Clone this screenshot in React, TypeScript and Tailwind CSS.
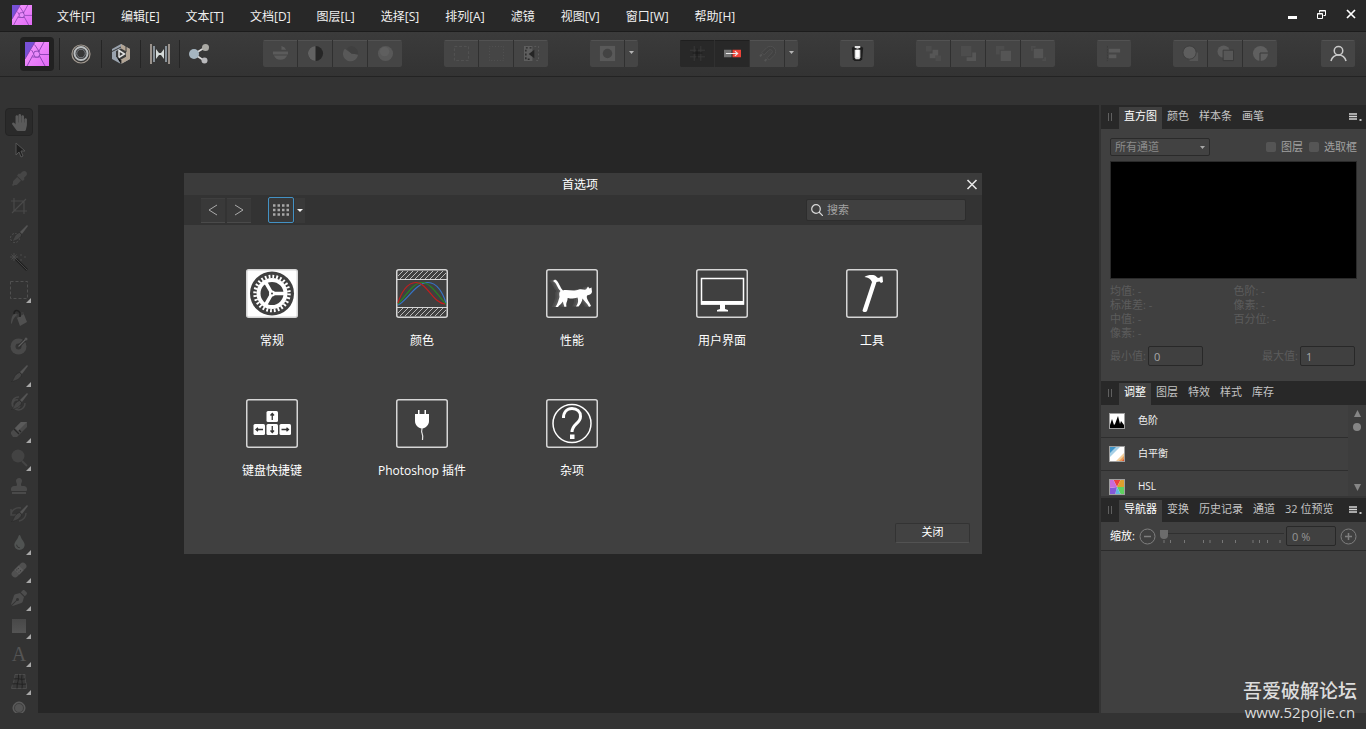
import React from 'react';
import { FaEyeDropper, FaHandPaper, FaPenNib, FaStamp, FaTint } from 'react-icons/fa';

const MENUS = [
  '文件[F]',
  '编辑[E]',
  '文本[T]',
  '文档[D]',
  '图层[L]',
  '选择[S]',
  '排列[A]',
  '滤镜',
  '视图[V]',
  '窗口[W]',
  '帮助[H]',
];

const AppLogo: React.FC<{ className: string }> = ({ className }) => (
  <svg className={className} viewBox="0 0 24 24">
    <defs>
      <linearGradient id="logoPink" x1="0" y1="0" x2="1" y2="1">
        <stop offset="0" stopColor="#f79bff" />
        <stop offset="1" stopColor="#e06af5" />
      </linearGradient>
    </defs>
    <rect width="24" height="24" fill="url(#logoPink)" />
    <path d="M0 0h10L0 17z" fill="#7850d6" />
    <path
      d="M10 0L0 17M9.500 2.500L14.500 10M19 0L13.500 10M15 12.500h9M14 13L20 24M7.500 15h7M8 13L2 24M6.500 8L9 12"
      stroke="#7a3aa8"
      strokeWidth="0.800"
      fill="none"
    />
    <path d="M9.500 9.500l3.500-.500 2 3-1.500 3H10L8.500 12z" fill="#e88bfa" stroke="#7a3aa8" strokeWidth="0.800" />
  </svg>
);

const MenuBar: React.FC = () => (
  <header className="flex h-8 shrink-0 items-center border-b border-[#1c1c1c] bg-[#282828] pl-3">
    <AppLogo className="mb-px size-5" />
    <nav className="ml-3 flex pt-0.5">
      {MENUS.map((menu) => (
        <button key={menu} type="button" className="px-[13px] text-xs whitespace-nowrap text-[#f0f0f0]">
          {menu}
        </button>
      ))}
    </nav>
    <div className="mb-1 ml-auto flex gap-[9px] pr-[5px] text-white">
      <button type="button" aria-label="minimize" className="flex h-5 w-5 items-center justify-center">
        <svg className="size-3" viewBox="0 0 12 12">
          <path d="M1 8h9v3H1z" fill="currentColor" />
        </svg>
      </button>
      <button type="button" aria-label="restore" className="flex h-5 w-5 items-center justify-center">
        <svg className="size-3" viewBox="0 0 12 12" fill="none" stroke="currentColor">
          <path d="M3.500 4.500v-2h6v5h-2M3.500 3h6M1.500 5.500h5v5h-5zM1.500 6h5" />
        </svg>
      </button>
      <button type="button" aria-label="close" className="flex h-5 w-5 items-center justify-center">
        <svg className="size-3" viewBox="0 0 12 12" fill="none" stroke="currentColor" strokeWidth="1.700">
          <path d="M2 2l8 8M10 2l-8 8" />
        </svg>
      </button>
    </div>
  </header>
);

const PERSONAS = [
  {
    name: 'liquify',
    art: (
      <g fill="none">
        <circle cx="10" cy="10" r="9" stroke="#a39a90" strokeWidth="1.200" />
        <circle cx="10" cy="9.500" r="6.500" stroke="#b8bcbe" strokeWidth="2" />
        <circle cx="10" cy="9.500" r="4.300" stroke="#7d8289" strokeWidth="1" />
      </g>
    ),
  },
  {
    name: 'develop',
    art: (
      <g>
        <path d="M10 0l9 5v10l-9 5-9-5V5z" fill="#9aa3ae" />
        <path d="M10 0l9 5v10l-9 5z" fill="#b3a595" />
        <path d="M10 4.500l5 2.800v5.400l-5 2.800-5-2.800V7.300z" fill="#3b3b3b" />
        <path d="M8 6.500l5.500 3.500-5.500 3.500z" fill="none" stroke="#e2e2e2" strokeWidth="1.500" />
        <path d="M1 7.500L10 3M15 8V2M5 12l5 4v4" stroke="#3b3b3b" strokeWidth="1" />
      </g>
    ),
  },
  {
    name: 'tone mapping',
    art: (
      <g>
        <path d="M1 0v20M19 0v20" stroke="#b3a9a0" strokeWidth="1.600" />
        <path d="M4 2v16M16 2v16" stroke="#9da8b2" strokeWidth="1.600" />
        <path d="M6 5l3 4h2l3-4v10l-3-4H9l-3 4z" fill="#d5dad8" />
      </g>
    ),
  },
  {
    name: 'export',
    art: (
      <g>
        <path d="M5 10l11-6.500M5 10l10 6.500" stroke="#d8d8d8" strokeWidth="1.600" />
        <circle cx="5" cy="10" r="5" fill="#a5b5c0" />
        <circle cx="16.500" cy="3.500" r="3.500" fill="#aaa9a4" />
        <circle cx="15.500" cy="16.500" r="3" fill="#b9b9bc" />
      </g>
    ),
  },
];

interface BarButtonProps {
  label: string;
  children?: React.ReactNode;
  narrow?: boolean;
  pressed?: boolean;
}

const BarButton: React.FC<BarButtonProps> = ({ label, children, narrow, pressed }) => (
  <button
    type="button"
    aria-label={label}
    className={`flex h-[27px] items-center justify-center border-t ${narrow ? 'w-[13px]' : 'w-[34px]'} ${
      pressed ? 'border-[#1f1f1f] bg-[#282828]' : 'border-[#525252] bg-[#454545]'
    }`}
  >
    {narrow ? (
      <svg className="mb-1 h-[3px] w-[5px]" viewBox="0 0 5 3">
        <path d="M0 0h5L2.500 3z" fill="#b4b4b4" />
      </svg>
    ) : (
      <svg className="mb-px size-[17px]" viewBox="0 0 18 18">
        {children}
      </svg>
    )}
  </button>
);

const BarGroup: React.FC<{ children: React.ReactNode }> = ({ children }) => (
  <div className="flex gap-px overflow-hidden rounded-xs bg-[#303030]">{children}</div>
);

const Toolbar: React.FC = () => (
  <div className="flex h-[45px] shrink-0 items-center border-b border-[#232323] bg-linear-to-b from-[#3b3b3b] to-[#333333] pr-[11px] pb-px pl-5">
    <button
      type="button"
      aria-label="photo"
      className="flex size-[34px] items-center justify-center rounded-sm bg-[#212121]"
    >
      <AppLogo className="size-6" />
    </button>
    <div className="ml-[5px] h-8 w-px bg-[#222222]" />
    <div className="flex items-center divide-x divide-[#252525]">
      {PERSONAS.map((persona) => (
        <button
          key={persona.name}
          type="button"
          aria-label={persona.name}
          className="flex h-7 w-[39px] items-center justify-center first:w-[42px] last:w-[37px]"
        >
          <svg className="size-5" viewBox="0 0 20 20">
            {persona.art}
          </svg>
        </button>
      ))}
    </div>
    <div className="ml-[46px] flex gap-[42px]">
      <BarGroup>
        <BarButton label="auto levels">
          <path d="M2 11a7.500 7 0 0 0 14 0zM10 1a7 7 0 0 1 5 4h-5zM1 7h16v3H1z" fill="#5b5b5b" />
        </BarButton>
        <BarButton label="auto contrast">
          <circle cx="9" cy="9" r="8" fill="#262626" />
          <path d="M9 1a8 8 0 0 0 0 16z" fill="#626262" />
        </BarButton>
        <BarButton label="auto colours">
          <path d="M3 4a8 8 0 1 0 14 6L10 9z" fill="#585858" />
          <path d="M10 1a8 8 0 0 1 7 9l-7-1-5-5a8 8 0 0 1 5-3z" fill="#404040" />
        </BarButton>
        <BarButton label="auto white balance">
          <circle cx="9" cy="9" r="8" fill="#585858" />
          <circle cx="8" cy="7" r="5" fill="#5f5f5f" />
        </BarButton>
      </BarGroup>
      <BarGroup>
        <BarButton label="select all">
          <rect x="1.500" y="1.500" width="15" height="15" fill="none" stroke="#545454" strokeDasharray="3 2" />
        </BarButton>
        <BarButton label="deselect">
          <rect x="1.500" y="1.500" width="15" height="15" fill="none" stroke="#545454" strokeDasharray="1 2" />
        </BarButton>
        <BarButton label="invert selection">
          <path d="M1 1h9v16H1z" fill="#5e5e5e" />
          <path d="M9 3H3v12h6" stroke="#282828" strokeWidth="1.500" strokeDasharray="2 2" fill="none" />
          <path d="M12 5v9L6 9.500z" fill="#252525" />
          <path d="M12 1.500h4.500v15H12" fill="none" stroke="#5c5c5c" strokeDasharray="2 2" />
        </BarButton>
      </BarGroup>
      <BarGroup>
        <BarButton label="quick mask">
          <rect x="1" y="1" width="16" height="16" fill="#595959" />
          <circle cx="9" cy="9" r="5" fill="#434343" />
        </BarButton>
        <BarButton label="quick mask options" narrow />
      </BarGroup>
      <BarGroup>
        <BarButton label="force pixel alignment" pressed>
          <path d="M1 5.500h16M1 12.500h16M5.500 1v16M12.500 1v16" stroke="#393939" />
          <path d="M4 8.500h10M8.500 4v10" stroke="#191919" />
        </BarButton>
        <BarButton label="move by whole pixels" pressed>
          <path d="M0 5h8v8H0z" fill="#747474" />
          <path d="M9 5h9v8H9z" fill="#ee4338" />
          <path d="M2 9h12M11.500 6.500L14.500 9l-3 2.500" stroke="#ececec" strokeWidth="1.200" fill="none" />
        </BarButton>
        <BarButton label="snapping">
          <path
            d="M3 8l5-5a5.500 5.500 0 0 1 8 8l-5 5-2.500-2.500 5-5a2 2 0 0 0-3-3l-5 5z"
            fill="#424242"
            stroke="#515151"
          />
          <path d="M1 12l2-2M6 17l2-2" stroke="#555555" strokeWidth="2" />
        </BarButton>
        <BarButton label="snapping options" narrow />
      </BarGroup>
      <BarGroup>
        <BarButton label="assistant">
          <path d="M3 3l3-2h6l3 2-1 12-2 2H6l-2-2z" fill="#1d1d1d" />
          <path d="M6 5h6v8l-1 2H7l-1-2z" fill="#dddddd" />
          <path d="M7.500 5h3v8h-3z" fill="#ffffff" />
          <path d="M6 1h6v2l-3 1-3-1z" fill="#e4e4e4" />
        </BarButton>
      </BarGroup>
      <BarGroup>
        <BarButton label="move to back">
          <path d="M1 1h6v6H1zM11 11h6v6h-6z" fill="#4c4c4c" />
          <path d="M8 5h6v6h-3v3H5V9h3z" fill="#565656" />
        </BarButton>
        <BarButton label="move backward">
          <path d="M1 1h11v11H1z" fill="#4d4d4d" />
          <path d="M13 8h4v9H7v-4h6z" fill="#565656" />
        </BarButton>
        <BarButton label="move forward">
          <path d="M1 1h9v4H5v5H1z" fill="#4d4d4d" />
          <path d="M6 6h11v11H6z" fill="#555555" />
        </BarButton>
        <BarButton label="move to front">
          <path d="M1 1h5v2H3v3H1zM17 17h-4v-2h2v-2h2z" fill="#4d4d4d" />
          <path d="M4 4h10v10H4z" fill="#555555" />
        </BarButton>
      </BarGroup>
      <BarGroup>
        <BarButton label="align">
          <path d="M1.500 1v16" stroke="#3c3c3c" strokeDasharray="2 1" />
          <path d="M3 4h12v4H3zM3 10h8v4H3z" fill="#5a5a5a" />
        </BarButton>
      </BarGroup>
      <BarGroup>
        <BarButton label="add">
          <path d="M8 8h9v9H8z" fill="#565656" />
          <circle cx="8" cy="8" r="7" fill="#5e5e5e" stroke="#404040" />
        </BarButton>
        <BarButton label="subtract">
          <circle cx="7" cy="7" r="6.500" fill="#5c5c5c" />
          <path d="M6.500 5.500h11v11h-11z" fill="#575757" stroke="#393939" />
        </BarButton>
        <BarButton label="intersect">
          <circle cx="9" cy="9" r="8" fill="#5f5f5f" />
          <path d="M8.500 17V8.500H17" fill="none" stroke="#383838" />
        </BarButton>
      </BarGroup>
    </div>
    <div className="ml-auto">
      <BarGroup>
        <BarButton label="account">
          <g fill="none" stroke="#c9c9c9" strokeWidth="1.600">
            <circle cx="9" cy="6" r="4.500" />
            <path d="M1 17c1-4 4-6.500 8-6.500s7 2.500 8 6.500" />
          </g>
        </BarButton>
      </BarGroup>
    </div>
  </div>
);

interface Tool {
  name: string;
  icon: React.ReactNode;
  menu?: boolean;
}

const Brush: React.FC<{ children?: React.ReactNode }> = ({ children }) => (
  <svg className="size-[18px]" viewBox="0 0 18 18">
    {children}
    <path d="M17 0l1 1-6 8-2-2z" fill="#545454" />
    <path d="M9.500 7.500l2 2c0 3-4 6-10 7 3-2 2-7 8-9z" fill="#464646" stroke="#272727" strokeWidth="0.500" />
  </svg>
);

const TOOLS: Tool[] = [
  { name: 'view', icon: <FaHandPaper className="size-[17px] text-[#5a5a5a]" /> },
  {
    name: 'move',
    icon: (
      <svg className="size-[18px]" viewBox="0 0 18 18">
        <path d="M6 2v12l3-3 2 5 2-1-2-5h4z" fill="#1f1f1f" stroke="#555555" />
      </svg>
    ),
  },
  { name: 'colour picker', icon: <FaEyeDropper className="size-[15px] text-[#464646]" /> },
  {
    name: 'crop',
    icon: (
      <svg className="size-[18px]" viewBox="0 0 18 18" fill="none" stroke="#494949" strokeWidth="1.200">
        <path d="M4 1v13h13M1 4h13v13M2 16L16 2" />
      </svg>
    ),
  },
  {
    name: 'selection brush',
    icon: (
      <Brush>
        <circle cx="5" cy="13" r="4.500" fill="none" stroke="#505050" strokeDasharray="2 1.500" />
      </Brush>
    ),
  },
  {
    name: 'flood select',
    icon: (
      <svg className="size-[18px]" viewBox="0 0 18 18">
        <path d="M6 6l11 11" stroke="#1f1f1f" strokeWidth="2.500" />
        <path d="M6 6l11 11" stroke="#555555" strokeWidth="0.700" />
        <path d="M4 0v8M0 4h8M1.500 1.500l5 5M6.500 1.500l-5 5M11 1v2M10 7h2M14 4h2" stroke="#4a4a4a" />
      </svg>
    ),
  },
  {
    name: 'marquee',
    menu: true,
    icon: (
      <svg className="size-[18px]" viewBox="0 0 18 18">
        <rect x="0.500" y="0.500" width="17" height="17" fill="none" stroke="#505050" strokeDasharray="3 2" />
      </svg>
    ),
  },
  {
    name: 'flood fill',
    icon: (
      <svg className="size-[18px]" viewBox="0 0 18 18">
        <path d="M6 6l7-3 4 10-7 4z" fill="#505050" />
        <path d="M6 6l7-3 1 2-7 4z" fill="#3a3a3a" />
        <path d="M7 5c-4-1-6 3-6 10 2-1 1-5 5-8z" fill="#4b4b4b" />
        <path d="M4 5c0-4 4-5 6-1v4" fill="none" stroke="#202020" strokeWidth="1.500" />
      </svg>
    ),
  },
  {
    name: 'gradient',
    icon: (
      <svg className="size-[18px]" viewBox="0 0 18 18">
        <circle cx="8.500" cy="9.500" r="8" fill="#494949" />
        <circle cx="8.500" cy="9.500" r="3" fill="#333333" />
        <path d="M8.500 9.500L16 2" stroke="#2a2a2a" strokeWidth="3" />
        <path d="M8.500 9.500L16 2" stroke="#606060" strokeWidth="1.200" />
        <circle cx="16" cy="2" r="1.500" fill="#555555" />
      </svg>
    ),
  },
  { name: 'paint brush', menu: true, icon: <Brush /> },
  {
    name: 'paint mixer',
    icon: (
      <Brush>
        <path d="M9 4a6.500 6.500 0 1 0 6 6M10 13a4 4 0 1 1-2-6" fill="none" stroke="#484848" strokeWidth="1.500" />
      </Brush>
    ),
  },
  {
    name: 'erase',
    menu: true,
    icon: (
      <svg className="size-[18px]" viewBox="0 0 18 18">
        <path d="M11 1h6v5L7 16H3l-2-3v-2z" fill="#4a4a4a" />
        <path d="M4 8l5 5M6 6l5 5" stroke="#272727" strokeWidth="1.300" />
        <path d="M11 1h6l-9 9-3-3z" fill="#5a5a5a" />
      </svg>
    ),
  },
  {
    name: 'dodge',
    menu: true,
    icon: (
      <svg className="size-[18px]" viewBox="0 0 18 18">
        <circle cx="8" cy="7" r="6.500" fill="#434343" />
        <path d="M12 12l5 5" stroke="#454545" strokeWidth="2" />
      </svg>
    ),
  },
  { name: 'clone', icon: <FaStamp className="size-4 text-[#4a4a4a]" /> },
  {
    name: 'undo brush',
    icon: (
      <Brush>
        <path d="M1 10a8 7 0 0 1 10-7M1 4v6h5M16 8a8 8 0 0 1-7 8" fill="none" stroke="#464646" strokeWidth="1.500" />
      </Brush>
    ),
  },
  { name: 'blur', menu: true, icon: <FaTint className="size-[15px] text-[#505352]" /> },
  {
    name: 'healing',
    menu: true,
    icon: (
      <svg className="size-[18px]" viewBox="0 0 18 18">
        <g transform="rotate(-45 9 9)">
          <rect x="0" y="5.500" width="18" height="7" rx="3.500" fill="#505050" />
          <rect x="6" y="5.500" width="6" height="7" fill="#5b5b5b" />
          <path d="M7 7.500h4M7 10.500h4" stroke="#333333" strokeDasharray="1 1" />
        </g>
      </svg>
    ),
  },
  { name: 'pen', menu: true, icon: <FaPenNib className="size-4 text-[#4d4d4d]" /> },
  {
    name: 'rectangle',
    menu: true,
    icon: <span className="h-3.5 w-3.5 bg-linear-to-b from-[#484848] to-[#545454]" />,
  },
  {
    name: 'text',
    menu: true,
    icon: <span className="font-['Liberation_Serif',serif] text-xl leading-5 text-[#555555]">A</span>,
  },
  {
    name: 'mesh warp',
    menu: true,
    icon: (
      <svg className="size-[18px]" viewBox="0 0 18 18" fill="none">
        <path d="M5 1.500h10c-1 5 2 9 1.500 14h-15C2 11 5 8 5 1.500z" fill="#3a3a3a" stroke="#4c4c4c" />
        <path d="M4 6c4-1 7 1 11 0M2 11c5-1 9 1 14 0M8.500 1.500c1 5-2 9-1.500 14M12 1.500c-1 5 1 9 0 14" stroke="#222222" />
      </svg>
    ),
  },
  {
    name: 'zoom',
    icon: (
      <svg className="mb-1 size-[14px]" viewBox="0 0 14 14">
        <circle cx="7" cy="7" r="6" fill="#545454" stroke="#606060" />
        <circle cx="7" cy="7" r="4.500" fill="none" stroke="#404040" />
      </svg>
    ),
  },
];

const ToolColumn: React.FC = () => (
  <aside className="w-[38px] shrink-0 overflow-hidden pt-[3px]">
    {TOOLS.map((tool, index) => (
      <button
        key={tool.name}
        type="button"
        aria-label={tool.name}
        className={`relative ml-[5px] flex size-7 items-center justify-center rounded-sm ${
          index === 0 ? 'border border-[#242424] bg-[#2a2a2a]' : ''
        }`}
      >
        {tool.icon}
        {tool.menu && (
          <svg className="absolute right-0.5 bottom-px size-[5px]" viewBox="0 0 5 5">
            <path d="M5 0v5H0z" fill="#a8a8a8" />
          </svg>
        )}
      </button>
    ))}
  </aside>
);

const Frame: React.FC<{ children: React.ReactNode; fill?: string }> = ({ children, fill = 'none' }) => (
  <svg className="h-[49px] w-[52px]" viewBox="0 0 52 49">
    <rect x="0.750" y="0.750" width="50.500" height="47.500" rx="2" fill={fill} stroke="#d6d6d6" strokeWidth="1.500" />
    {children}
  </svg>
);

const CAT =
  'M7 12l2-1.500C13 12 14 19 17 21.500C21 20 27 23 33 20.500C36 20 38 21 40 20.500L42 17.500L43.500 19.500L45.500 18.500L46 23C45.500 25.500 43 26 41 26.500C40 30 43 32 45 37L43 38C41 34 38 32 36.500 29.500C36 33 34 36 32.500 37.500H30C32.500 34 32.500 31 31.500 28.500C27 30 23 29.500 21.500 29C22 32 19.500 33.500 20.500 37.500L18.500 38C17.500 35 17 34 17 32.500C15 35 13 36.500 12 38H9.500C12 34 12.500 31 13.500 28C13 25 13 23 14.500 22C11 19 11 14 7 12Z';

const PREFERENCES = [
  {
    label: '常规',
    icon: (
      <Frame fill="#ffffff">
        <circle cx="26" cy="24.500" r="22" fill="#3f3f3f" />
        <circle cx="26" cy="24.500" r="17" fill="none" stroke="#fff" strokeWidth="3.500" strokeDasharray="1.800 2.010" />
        <circle cx="26" cy="24.500" r="13.500" fill="none" stroke="#fff" strokeWidth="4" />
        <path d="M26 24.500h13M26 24.500l-6.500-11.300M26 24.500l-6.500 11.300" stroke="#fff" strokeWidth="3.500" />
        <circle cx="26" cy="24.500" r="3" fill="#fff" />
        <circle cx="26" cy="24.500" r="1" fill="#3f3f3f" />
      </Frame>
    ),
  },
  {
    label: '颜色',
    icon: (
      <Frame>
        <path
          d="M2 7l5-5M4 10l8-8M9 10l8-8M14 10l8-8M19 10l8-8M24 10l8-8M29 10l8-8M34 10l8-8M39 10l8-8M44 10l6-6M2 44l5-5M4 47l8-8M9 47l8-8M14 47l8-8M19 47l8-8M24 47l8-8M29 47l8-8M34 47l8-8M39 47l8-8M44 47l6-6"
          stroke="#b9b9b9"
        />
        <path d="M1 10.500h50M1 38.500h50" stroke="#d6d6d6" />
        <g fill="none" strokeWidth="1.200">
          <path d="M2 36C10 33 20 13.500 32 13.500C41 13.500 47 24 50 34" stroke="#3574c8" />
          <path d="M2 35C10 27 17 13.500 26 13.500S42 27 50 35" stroke="#288322" />
          <path d="M2 34C5 24 11 13.500 20 13.500C31 13.500 37 34 49 35" stroke="#c31e1e" />
        </g>
      </Frame>
    ),
  },
  {
    label: '性能',
    icon: (
      <Frame>
        <path d={CAT} fill="#4d4d4d" transform="translate(-4 0)" />
        <path d={CAT} fill="#5a5a5a" transform="translate(-2 0)" />
        <path d={CAT} fill="#ffffff" />
      </Frame>
    ),
  },
  {
    label: '用户界面',
    icon: (
      <Frame>
        <path d="M5.500 9.500h42V35h-42z" fill="none" stroke="#fff" strokeWidth="1.500" />
        <path d="M5 32h43v3.500H5zM24 35h5v5l3 1v1.500H21V41l3-1z" fill="#fff" />
      </Frame>
    ),
  },
  {
    label: '工具',
    icon: (
      <Frame>
        <path
          d="M18.500 8c3-2 7-2.300 10.500-1.500l3 2.500 2-.500.500-1h2l.500 5.500-2 1-1.500-1.500-3 .500-9.500 29c-1 1.500-4 1.500-4.500-.500L26 13c-1-3-4-4.500-7.500-5z"
          fill="#fff"
        />
      </Frame>
    ),
  },
  {
    label: '键盘快捷键',
    icon: (
      <Frame>
        <g fill="#fff">
          <rect x="20.500" y="12" width="11.500" height="11" rx="1.500" />
          <rect x="7.500" y="25" width="11.500" height="11" rx="1.500" />
          <rect x="20.500" y="25" width="11.500" height="11" rx="1.500" />
          <rect x="33.500" y="25" width="11.500" height="11" rx="1.500" />
        </g>
        <path
          d="M26.250 21v-6M24.500 16.500l1.750-2 1.750 2M26.250 27v6M24.500 31.500l1.750 2 1.750-2M17 30.500h-6M12 28.750l-2 1.750 2 1.750M35.500 30.500h6M40.500 28.750l2 1.750-2 1.750"
          stroke="#333"
          strokeWidth="1.300"
          fill="none"
        />
      </Frame>
    ),
  },
  {
    label: 'Photoshop 插件',
    icon: (
      <Frame>
        <path d="M22 11h1.500v4H22zM28.500 11H30v4h-1.500zM19 15h14v7c0 4-3 7-7 7.500-4-.500-7-3.500-7-7.500z" fill="#fff" />
        <path d="M26 29c0 3-1 3 0 5s1 3 .500 7" fill="none" stroke="#e4e4e4" strokeWidth="1.200" />
      </Frame>
    ),
  },
  {
    label: '杂项',
    icon: (
      <Frame>
        <circle cx="26" cy="24.500" r="19" fill="none" stroke="#fff" strokeWidth="1.500" />
        <path
          d="M17.500 19c0-6 3.500-9.500 8.500-9.500s8.500 3 8.500 8c0 7-8.500 7.500-8.500 15.500"
          fill="none"
          stroke="#fff"
          strokeWidth="3"
        />
        <path d="M24 35.500h4.500V40H24z" fill="#fff" />
      </Frame>
    ),
  },
];

const PreferencesDialog: React.FC = () => (
  <section
    role="dialog"
    aria-label="首选项"
    className="absolute top-[68px] left-[146px] flex h-[381px] w-[798px] flex-col bg-[#404040] text-white"
  >
    <div className="relative flex h-[22px] items-center justify-center bg-[#3b3b3b] pt-0.5 pr-[6px]">
      <h1 className="text-xs">首选项</h1>
      <button type="button" aria-label="close" className="absolute right-1 flex size-3 items-center">
        <svg className="size-3" viewBox="0 0 12 12" fill="none" stroke="#e6e6e6" strokeWidth="1.600">
          <path d="M1.500 1l9 9M10.500 1l-9 9" />
        </svg>
      </button>
    </div>
    <div className="flex h-[30px] items-center bg-[#333333] pr-4 pl-[17px]">
      <div className="flex gap-0.5">
        <button
          type="button"
          aria-label="back"
          className="flex h-[25px] w-6 items-center justify-center border-y border-t-[#3f3f3f] border-b-[#4a4a4a] bg-[#393939]"
        >
          <svg className="h-3 w-2.5" viewBox="0 0 10 12" fill="none" stroke="#ababab">
            <path d="M9 1L1 6l8 5" />
          </svg>
        </button>
        <button
          type="button"
          aria-label="forward"
          className="flex h-[25px] w-6 items-center justify-center border-y border-t-[#3f3f3f] border-b-[#4a4a4a] bg-[#393939]"
        >
          <svg className="h-3 w-2.5" viewBox="0 0 10 12" fill="none" stroke="#ababab">
            <path d="M1 1l8 5-8 5" />
          </svg>
        </button>
      </div>
      <div className="ml-[17px] flex items-center gap-px">
        <button
          type="button"
          aria-label="grid"
          className="flex size-[26px] items-center justify-center rounded-xs border border-[#4391c4] bg-[#393939]"
        >
          <svg className="h-3 w-4" viewBox="0 0 16 12">
            <path
              d="M0 1.500h16M0 6h16M0 10.500h16"
              stroke="#a8a8a8"
              strokeWidth="2.500"
              strokeDasharray="2.500 2"
            />
          </svg>
        </button>
        <button type="button" aria-label="view list" className="flex h-[25px] w-2.5 items-center justify-center bg-[#393939]">
          <svg className="h-[3px] w-1.5" viewBox="0 0 6 3">
            <path d="M0 0h6L3 3z" fill="#f2f2f2" />
          </svg>
        </button>
      </div>
      <label className="ml-auto flex h-[22px] w-40 items-center gap-1 rounded-xs border border-[#2d2d2d] bg-[#404040] pl-1">
        <svg className="size-3 shrink-0" viewBox="0 0 12 12" fill="none" stroke="#d9d9d9" strokeWidth="1.200">
          <circle cx="5" cy="5" r="4.300" />
          <path d="M8 8l4 4" />
        </svg>
        <input
          type="text"
          aria-label="搜索"
          placeholder="搜索"
          className="w-full text-[11px] outline-none placeholder:text-[#a3a3a3]"
        />
      </label>
    </div>
    <div className="grid grid-cols-5 gap-y-12 pt-11 pr-[35px] pl-[13px]">
      {PREFERENCES.map((item) => (
        <button key={item.label} type="button" className="flex flex-col items-center gap-[13px] text-xs leading-5">
          {item.icon}
          {item.label}
        </button>
      ))}
    </div>
    <button
      type="button"
      className="mt-auto mr-3 mb-[11px] flex h-5 w-[75px] items-center justify-center self-end rounded-xs border border-[#333333] border-b-[#525252] bg-[#424242] pb-0.5 text-[11px]"
    >
      关闭
    </button>
  </section>
);

const TabBar: React.FC<{ tabs: string[]; menu?: boolean }> = ({ tabs, menu }) => (
  <div className="flex h-6 shrink-0 items-end bg-[#282828] pr-1">
    <svg className="mx-[7px] mb-2 h-2 w-1" viewBox="0 0 4 8">
      <path d="M0.500 0v8M3.500 0v8" stroke="#606060" />
    </svg>
    {tabs.map((tab, index) => (
      <button
        key={tab}
        type="button"
        className={`h-[22px] px-[5px] pb-1 text-[11px] leading-[18px] whitespace-nowrap ${
          index === 0 ? 'bg-[#404040] text-white' : 'text-[#c4c4c4]'
        }`}
      >
        {tab}
      </button>
    ))}
    {menu && (
      <button type="button" aria-label="panel menu" className="mb-2 ml-auto">
        <svg className="h-2 w-[13px]" viewBox="0 0 13 8">
          <path d="M0 1h8M0 3.500h8M0 6h8" stroke="#d5d5d5" strokeWidth="1.500" />
          <path d="M10.500 6h2v2h-2z" fill="#c0c0c0" />
        </svg>
      </button>
    )}
  </div>
);

const HistogramPanel: React.FC = () => (
  <section className="flex flex-col">
    <TabBar tabs={['直方图', '颜色', '样本条', '画笔']} menu />
    <div className="px-[9px] pt-[9px] pb-[15px] text-[11px] text-[#5c5c5c]">
      <div className="flex items-center text-[#a0a0a0]">
        <div className="relative">
          <select
            aria-label="channel"
            className="block h-[18px] w-[100px] appearance-none rounded-xs border border-[#2a2a2a] bg-[#424242] pl-1 text-[11px] leading-4 text-[#8b8b8b] outline-none"
          >
            <option>所有通道</option>
          </select>
          <svg className="pointer-events-none absolute top-2 right-[5px] h-[3px] w-[5px]" viewBox="0 0 5 3">
            <path d="M0 0h5L2.500 3z" fill="#a8a8a8" />
          </svg>
        </div>
        <div className="ml-auto flex gap-1.5">
          {['图层', '选取框'].map((label) => (
            <label key={label} className="flex items-center gap-[5px] leading-[18px]">
              <input type="checkbox" className="size-2.5 appearance-none rounded-xs bg-[#555555]" />
              {label}
            </label>
          ))}
        </div>
      </div>
      <div className="mt-[5px] h-[118px] border border-[#2a2a2a] bg-black" />
      <dl className="mt-[5px] grid grid-cols-2 leading-[14px]">
        <dt>均值: -</dt>
        <dt>色阶: -</dt>
        <dt>标准差: -</dt>
        <dt>像素: -</dt>
        <dt>中值: -</dt>
        <dt>百分位: -</dt>
        <dt>像素: -</dt>
      </dl>
      <div className="mt-[6px] flex justify-between">
        <label className="flex items-center gap-0.5">
          最小值:
          <input
            type="text"
            defaultValue="0"
            className="h-5 w-[55px] rounded-xs border border-[#282828] px-[5px] text-[11px] text-[#a8a8a8] outline-none"
          />
        </label>
        <label className="mr-0.5 flex items-center gap-0.5">
          最大值:
          <input
            type="text"
            defaultValue="1"
            className="h-5 w-[55px] rounded-xs border border-[#282828] px-[5px] text-[11px] text-[#a8a8a8] outline-none"
          />
        </label>
      </div>
    </div>
  </section>
);

const ADJUSTMENTS = [
  {
    label: '色阶',
    art: <path d="M1 15V12l2-6 2 6 1-1 3-8 2 8 1-3 3 4v3z" fill="#000" />,
  },
  {
    label: '白平衡',
    art: (
      <>
        <path d="M0 0h9L0 9z" fill="#3f93c6" />
        <path d="M8 0h4L0 12V8z" fill="#a5cfe6" />
        <path d="M16 6v4l-6 6H6z" fill="#f3cf9c" />
        <path d="M16 9v7H9z" fill="#e89a55" />
        <path d="M16 12v4h-4z" fill="#dd4a2c" />
      </>
    ),
  },
  {
    label: 'HSL',
    art: (
      <>
        <path d="M8 8L4 0h8z" fill="#ec3f3f" />
        <path d="M8 8l4-8h4v8z" fill="#dca02e" />
        <path d="M8 8h8v8h-4z" fill="#5fd05f" />
        <path d="M8 8l4 8H6z" fill="#62b8de" />
        <path d="M8 8l-2 8H0V9z" fill="#8359d8" />
        <path d="M8 8L0 9V0h4z" fill="#c96bd8" />
      </>
    ),
  },
];

const AdjustmentPanel: React.FC = () => (
  <section className="flex flex-col">
    <TabBar tabs={['调整', '图层', '特效', '样式', '库存']} />
    <div className="flex h-[91px] overflow-hidden">
      <ul className="flex-1">
        {ADJUSTMENTS.map((item) => (
          <li key={item.label} className="flex h-[33px] items-center gap-[13px] border-b border-[#2e2e2e] pl-2">
            <svg className="size-4" viewBox="0 0 16 16">
              <rect width="16" height="16" fill="#fff" />
              {item.art}
              <rect x="0.500" y="0.500" width="15" height="15" fill="none" stroke="#a0a0a0" />
            </svg>
            <span className="text-[10px] text-[#f0f0f0]">{item.label}</span>
          </li>
        ))}
      </ul>
      <div className="flex w-[18px] flex-col items-center bg-[#3d3d3d] py-[5px]">
        <svg className="h-[7px] w-[7px]" viewBox="0 0 7 7">
          <path d="M0 7h7L3.500 0z" fill="#868686" />
        </svg>
        <span className="mt-[6px] size-2 rounded-full bg-[#868686]" />
        <svg className="mt-auto h-[7px] w-[7px]" viewBox="0 0 7 7">
          <path d="M0 0h7L3.500 7z" fill="#868686" />
        </svg>
      </div>
    </div>
  </section>
);

const NavigatorPanel: React.FC = () => (
  <section className="flex flex-1 flex-col border-t-2 border-[#363636]">
    <TabBar tabs={['导航器', '变换', '历史记录', '通道', '32 位预览']} menu />
    <div className="flex h-[29px] items-center border-b border-[#2b2b2b] pr-[9px] pl-[9px]">
      <label htmlFor="zoom" className="text-[11px] whitespace-nowrap text-white">
        缩放:
      </label>
      <button type="button" aria-label="zoom out" className="ml-1">
        <svg className="block size-[17px]" viewBox="0 0 17 17" fill="none" stroke="#7f7f7f">
          <circle cx="8.500" cy="8.500" r="7.500" />
          <path d="M5 8.500h7" strokeWidth="1.500" />
        </svg>
      </button>
      <div className="mr-0.5 ml-1 min-w-0 flex-1">
        <input
          id="zoom"
          type="range"
          min="0"
          max="100"
          defaultValue="0"
          className="block h-2.5 w-full appearance-none bg-linear-to-b from-transparent from-40% via-[#303030] via-45% to-transparent to-50% [&::-webkit-slider-thumb]:h-[9px] [&::-webkit-slider-thumb]:w-2 [&::-webkit-slider-thumb]:appearance-none [&::-webkit-slider-thumb]:rounded-b-sm [&::-webkit-slider-thumb]:bg-[#6c6c6c]"
        />
        <svg className="mt-px ml-[3px] block h-[3px] w-[119px]" viewBox="0 0 119 3">
          <path
            d="M1 0v3M7.500 0v3M21.500 0v3M40.500 0v3M47 0v3M59.500 0v3M72.500 0v3M90 0v3M96.500 0v3M104.500 0v3M117 0v3"
            stroke="#777777"
          />
        </svg>
      </div>
      <input
        type="text"
        aria-label="zoom value"
        defaultValue="0 %"
        className="h-5 w-[50px] rounded-xs border border-[#282828] px-[5px] text-[11px] text-[#959595] outline-none"
      />
      <button type="button" aria-label="zoom in" className="ml-1">
        <svg className="block size-[17px]" viewBox="0 0 17 17" fill="none" stroke="#7f7f7f">
          <circle cx="8.500" cy="8.500" r="7.500" />
          <path d="M5 8.500h7M8.500 5v7" strokeWidth="1.500" />
        </svg>
      </button>
    </div>
  </section>
);

export default function App() {
  return (
    <div className="relative flex h-screen flex-col overflow-hidden bg-[#333333] font-['Open_Sans','Noto_Sans_CJK_SC',sans-serif] text-xs">
      <MenuBar />
      <Toolbar />
      <div className="h-7 shrink-0" />
      <div className="flex min-h-0 flex-1">
        <ToolColumn />
        <main className="relative min-w-0 flex-1 bg-[#262626]">
          <PreferencesDialog />
        </main>
        <aside className="ml-0.5 flex w-[265px] shrink-0 flex-col bg-[#404040]">
          <HistogramPanel />
          <AdjustmentPanel />
          <NavigatorPanel />
        </aside>
      </div>
      <div className="h-4 shrink-0" />
      <div className="absolute right-[9px] bottom-[7px] text-center font-medium text-[#dcdcdc]">
        <p className="text-[19px] leading-[21px]">吾爱破解论坛</p>
        <p className="text-[15px] leading-5">www.52pojie.cn</p>
      </div>
    </div>
  );
}
